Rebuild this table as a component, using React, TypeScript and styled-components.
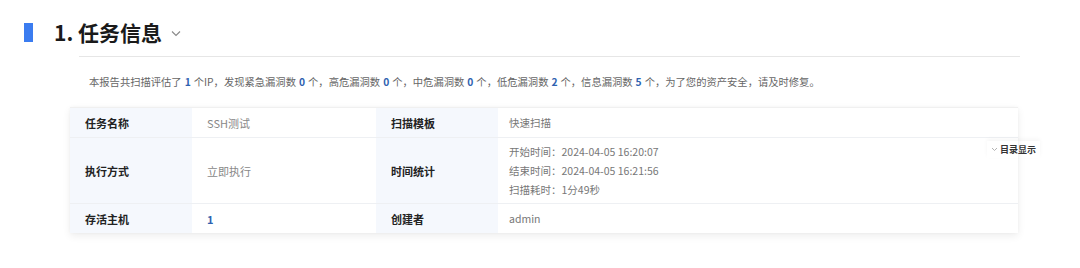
import React from 'react';
import styled, { createGlobalStyle } from 'styled-components';

const GlobalStyle = createGlobalStyle`
  body {
    margin: 0;
    background: #ffffff;
    font-family: "Noto Sans CJK SC", "Noto Sans", sans-serif;
  }
`;

const Page = styled.div`
  position: relative;
  width: 1080px;
  height: 268px;
  overflow: hidden;
  padding-top: 19px;
  box-sizing: border-box;
`;

const Header = styled.div`
  display: flex;
  align-items: center;
  padding-left: 24px;
  height: 26px;
`;

const Marker = styled.div`
  width: 9px;
  height: 19px;
  background: #3b7cf0;
`;

const Title = styled.h1`
  margin: 0 0 0 21px;
  font-size: 21px;
  font-weight: 700;
  color: #1a1a1a;
  line-height: 26px;
`;

const Chevron = styled.svg`
  margin-left: 9px;
  margin-top: 2px;
`;

const Divider = styled.div`
  margin: 11px 0 0 79px;
  width: 941px;
  height: 1px;
  background: #e6e6e6;
`;

const Summary = styled.p`
  margin: 17px 0 0 89px;
  font-size: 10.3px;
  line-height: 16px;
  color: #666;
`;

const Num = styled.b`
  color: #2f62b0;
  font-weight: 700;
  margin: 0 3px;
`;

const Table = styled.div`
  margin: 17px 0 0 70px;
  width: 948px;
  display: grid;
  grid-template-columns: 122px 184px 122px 1fr;
  grid-template-rows: 30px 66px 29px;
  box-shadow: 0 3px 8px rgba(0, 0, 0, 0.07), 0 0 3px rgba(0, 0, 0, 0.03);
  border-top: 1px solid #f0f0f0;
`;

const Cell = styled.div<{ $label?: boolean; $last?: boolean; $pad?: number }>`
  display: flex;
  flex-direction: column;
  justify-content: center;
  padding-left: ${({ $pad }) => $pad ?? 15}px;
  background: ${({ $label }) => ($label ? '#f5f8fd' : '#ffffff')};
  border-bottom: ${({ $last }) => ($last ? 'none' : '1px solid #eef0f3')};
  font-size: 11px;
  font-weight: ${({ $label }) => ($label ? 700 : 400)};
  color: ${({ $label }) => ($label ? '#222' : '#888')};
`;

const Line = styled.div`
  font-size: 10.5px;
  line-height: 19px;
  color: #777;
`;

const Blue = styled.span`
  color: #2f62b0;
  font-weight: 700;
`;

const TocTab = styled.div`
  position: absolute;
  left: 987px;
  top: 141px;
  display: flex;
  align-items: center;
  gap: 2px;
  font-size: 9px;
  font-weight: 700;
  color: #333;
  padding: 2px 4px;
  box-shadow: 0 -2px 4px rgba(0, 0, 0, 0.04);
`;

export default function App() {
  return (
    <>
      <GlobalStyle />
      <Page>
        <Header>
          <Marker />
          <Title>1. 任务信息</Title>
          <Chevron width="10" height="7" viewBox="0 0 10 7">
            <path d="M1 1.5 L5 5.5 L9 1.5" fill="none" stroke="#888" strokeWidth="1.1" />
          </Chevron>
        </Header>
        <Divider />
        <Summary>
          本报告共扫描评估了<Num>1</Num>个IP，发现紧急漏洞数<Num>0</Num>个，高危漏洞数<Num>0</Num>个，中危漏洞数<Num>0</Num>个，低危漏洞数<Num>2</Num>个，信息漏洞数<Num>5</Num>个，为了您的资产安全，请及时修复。
        </Summary>
        <Table>
          <Cell $label>任务名称</Cell>
          <Cell>SSH测试</Cell>
          <Cell $label>扫描模板</Cell>
          <Cell $pad={11}><Line>快速扫描</Line></Cell>

          <Cell $label>执行方式</Cell>
          <Cell>立即执行</Cell>
          <Cell $label>时间统计</Cell>
          <Cell $pad={11}>
            <Line>开始时间：2024-04-05 16:20:07</Line>
            <Line>结束时间：2024-04-05 16:21:56</Line>
            <Line>扫描耗时：1分49秒</Line>
          </Cell>

          <Cell $label $last>存活主机</Cell>
          <Cell $last><Blue>1</Blue></Cell>
          <Cell $label $last>创建者</Cell>
          <Cell $last $pad={11}><Line>admin</Line></Cell>
        </Table>
        <TocTab>
          <svg width="7" height="5" viewBox="0 0 7 5">
            <path d="M1 1 L3.5 3.5 L6 1" fill="none" stroke="#aaa" strokeWidth="0.9" />
          </svg>
          目录显示
        </TocTab>
      </Page>
    </>
  );
}
